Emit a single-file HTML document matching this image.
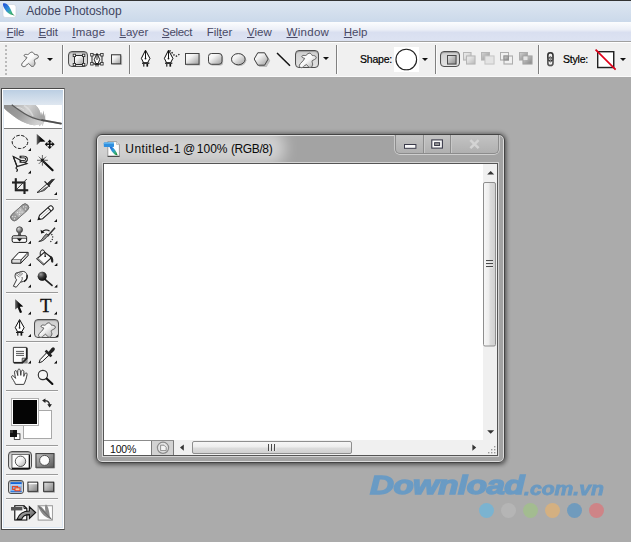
<!DOCTYPE html>
<html><head><meta charset="utf-8">
<style>
html,body{margin:0;padding:0;}
body{width:631px;height:542px;overflow:hidden;background:#ababab;position:relative;font-family:"Liberation Sans",sans-serif;}
.abs,.mi,.sep,.tsep,svg{position:absolute;}
svg{overflow:visible;}
#titlebar{left:0;top:0;width:631px;height:22px;background:linear-gradient(#dde6f1,#cbd9ea);border-top:1px solid #333;box-sizing:border-box;}
#title{left:26.2px;top:4.2px;font-size:12px;color:#41455f;white-space:nowrap;}
#menubar{left:0;top:22px;width:631px;height:19px;background:linear-gradient(#fcfdfe 0%,#eceff7 40%,#d9dff0 55%,#dde3f2 100%);}
.mi{top:25.5px;font-size:11.5px;color:#4a4a66;white-space:nowrap;}
#optbar{left:0;top:41px;width:631px;height:36px;background:#f0f0f0;border-top:1px solid #a0a0a0;border-bottom:1px solid #fafafa;box-sizing:border-box;box-shadow:inset 0 1px 0 #fff;}
.sep{top:45px;width:1px;height:29px;background:#808080;box-shadow:1px 0 0 #fbfbfb;}
.lbl{font-size:10.5px;letter-spacing:-.2px;color:#000;-webkit-text-stroke:.2px #000;top:53px;white-space:nowrap;}
.selbtn{box-sizing:border-box;border:1px solid #4e4e4e;border-radius:4px;background:linear-gradient(#cfcfcf,#e2e2e2);box-shadow:inset 0 1px 1px rgba(0,0,0,.25);}
.dd{width:0;height:0;border-left:3px solid transparent;border-right:3px solid transparent;border-top:3px solid #111;}
#toolbox{left:1px;top:88px;width:64px;height:442px;background:#f0f0f0;border:1px solid #484848;border-right-color:#808080;box-sizing:border-box;box-shadow:inset 0 0 0 1px #fff,inset 0 0 0 2px #dbe6f2;}
#tbhead{left:3px;top:90px;width:60px;height:15px;background:linear-gradient(#bccfe3,#dfe7f0);}
#tbfeather{left:4px;top:105px;width:58px;height:23px;background:#fff;border-bottom:1px solid #808080;}
.tsep{left:6px;width:52px;height:1px;background:#9a9a9a;box-shadow:0 1px 0 #fbfbfb;}
#docshadow{left:96px;top:134px;width:409px;height:329px;border-radius:6px;box-shadow:0 0 4px 1px rgba(0,0,0,.38),1px 2px 4px rgba(0,0,0,.25);}
#docwin{left:96px;top:134px;width:409px;height:329px;background:#a3a3a3;border:1px solid #444;border-radius:6px;box-sizing:border-box;box-shadow:inset 0 0 0 1px #dcdcdc;overflow:hidden;}
#docinner{left:103px;top:163px;width:395px;height:293px;background:#f0f0f0;border:1px solid #555;box-sizing:border-box;box-shadow:0 0 0 1px #d4d4d4;}
#canvas{left:104px;top:164px;width:379px;height:276px;background:#fff;}
#doctitle,.dt{top:142px;font-size:12px;color:#0a0a0a;white-space:nowrap;}
#wbtns{left:395px;top:135px;width:104px;height:19px;border:1px solid #8c8c8c;border-top:none;border-radius:0 0 5px 5px;box-sizing:border-box;background:linear-gradient(#c3c3c3,#b0b0b0);box-shadow:0 1px 0 #cfcfcf,1px 0 0 #c8c8c8,-1px 0 0 #c8c8c8;}
.wdiv{top:135px;width:1px;height:18px;background:#8c8c8c;box-shadow:1px 0 0 #c8c8c8;}
#wm1{left:369.5px;top:470.5px;font:italic bold 25px "Liberation Sans",sans-serif;color:#6a9bc4;transform-origin:0 0;transform:scaleX(1.325);-webkit-text-stroke:1.4px #6a9bc4;white-space:nowrap;letter-spacing:-.4px;}
#wm2{left:524px;top:478.5px;font:italic bold 18px "Liberation Sans",sans-serif;color:#6a99c1;transform-origin:0 0;transform:scaleX(1.175);-webkit-text-stroke:.8px #6a99c1;white-space:nowrap;}
.dot{width:15px;height:15px;border-radius:50%;top:503px;filter:blur(.5px);}
</style></head><body>
<!-- app title bar -->
<div id="titlebar" class="abs"></div>
<svg style="left:2px;top:3px" width="15" height="15" viewBox="0 0 15 15">
<defs><linearGradient id="fg" x1="0" y1="0" x2="1" y2="1"><stop offset="0" stop-color="#1f49d8"/><stop offset=".45" stop-color="#2f8fd8"/><stop offset=".7" stop-color="#3fb88a"/><stop offset="1" stop-color="#0b6a1c"/></linearGradient></defs>
<rect x="1" y="1.5" width="13" height="13" rx="2.5" fill="#fff" stroke="#c9d0da" stroke-width=".6"/>
<path d="M1 .6 C3 -.6 5.2 .6 6.8 3 C8.4 5.5 9.8 8.4 10.6 10.8 L12.8 12.8 L10 11.8 C7.4 11.6 4.6 9.4 3 6.6 C1.8 4.6 .6 2.4 1 .6Z" fill="url(#fg)"/>
</svg>
<div id="title" class="abs">Adobe Photoshop</div>
<!-- menu bar -->
<div id="menubar" class="abs"></div>
<div class="mi" style="left:6.6px;letter-spacing:-.25px"><u>F</u>ile</div>
<div class="mi" style="left:38.4px;letter-spacing:-.1px"><u>E</u>dit</div>
<div class="mi" style="left:72.3px;letter-spacing:.2px"><u>I</u>mage</div>
<div class="mi" style="left:119.5px"><u>L</u>ayer</div>
<div class="mi" style="left:162px;letter-spacing:-.3px"><u>S</u>elect</div>
<div class="mi" style="left:206.7px">Fil<u>t</u>er</div>
<div class="mi" style="left:247px"><u>V</u>iew</div>
<div class="mi" style="left:286.5px;letter-spacing:.3px"><u>W</u>indow</div>
<div class="mi" style="left:343.8px"><u>H</u>elp</div>
<!-- options bar -->
<div id="optbar" class="abs"></div>
<!--OPT-START-->
<div class="abs" style="left:5px;top:44px;width:2px;height:31px;background:repeating-linear-gradient(#f0f0f0 0,#f0f0f0 1px,#b4b4b4 1px,#b4b4b4 3px,#f0f0f0 3px,#f0f0f0 4px);opacity:.9"></div>
<div class="sep" style="left:62px"></div>
<div class="sep" style="left:129px"></div>
<div class="sep" style="left:336px"></div>
<div class="sep" style="left:435px"></div>
<div class="sep" style="left:538px"></div>
<div class="abs selbtn" style="left:68px;top:50.5px;width:20px;height:16.5px"></div>
<div class="abs selbtn" style="left:295px;top:50px;width:24px;height:18px"></div>
<div class="abs selbtn" style="left:440px;top:50.5px;width:20px;height:16.5px"></div>
<div class="abs dd" style="left:47px;top:58px"></div>
<div class="abs dd" style="left:323px;top:57px"></div>
<div class="abs dd" style="left:422px;top:58px"></div>
<div class="abs dd" style="left:620px;top:58px"></div>
<div class="abs lbl" style="left:360px">Shape:</div>
<div class="abs lbl" style="left:563px">Style:</div>
<div class="abs" style="left:394px;top:47px;width:25px;height:25px;background:#fff"></div>
<svg style="left:0;top:0;filter:drop-shadow(.8px .8px .5px rgba(0,0,0,.25))" width="631" height="80" viewBox="0 0 631 80">
<defs>
<linearGradient id="bl" x1="0" y1="0" x2="1" y2="1"><stop offset="0" stop-color="#fff"/><stop offset=".5" stop-color="#f8f8f8"/><stop offset="1" stop-color="#a2a2a2"/></linearGradient>
<linearGradient id="sq" x1="0" y1="0" x2="1" y2="1"><stop offset="0" stop-color="#fff"/><stop offset=".35" stop-color="#f2f2f2"/><stop offset="1" stop-color="#9c9c9c"/></linearGradient><linearGradient id="sq2" x1="0" y1="0" x2="1" y2="1"><stop offset="0" stop-color="#e8e8e8"/><stop offset="1" stop-color="#8a8a8a"/></linearGradient>
<linearGradient id="dk" x1="0" y1="0" x2="1" y2="1"><stop offset="0" stop-color="#d8d8d8"/><stop offset="1" stop-color="#555"/></linearGradient>
</defs>
<!-- custom shape blob (tool preset) -->
<path id="blob1" d="M31.5,52.2C33,52 34,53.5 34.6,54.6C36,54.4 38.3,54.8 38.5,56.5C38.6,58.3 35.5,58.8 34.4,59.8C33.8,61 35.5,62.5 34.8,64.2C34.2,66 32.8,66.8 31.8,66.4C30.2,65.8 29.8,64 28.7,63.5C27.3,63.6 26,66.5 24.2,66.7C22.6,66.8 21.3,65.6 21.7,64.2C22.3,62.2 26,60 27,57.3C26,57 24.3,56.8 24.2,55.6C24.2,54.3 26,54.2 27.5,54.6C29,54.6 29.5,52.4 31.5,52.2Z" fill="url(#bl)" stroke="#6a6a6a" stroke-width="1"/>
<path transform="translate(277.7,1)" d="M31.5,52.2C33,52 34,53.5 34.6,54.6C36,54.4 38.3,54.8 38.5,56.5C38.6,58.3 35.5,58.8 34.4,59.8C33.8,61 35.5,62.5 34.8,64.2C34.2,66 32.8,66.8 31.8,66.4C30.2,65.8 29.8,64 28.7,63.5C27.3,63.6 26,66.5 24.2,66.7C22.6,66.8 21.3,65.6 21.7,64.2C22.3,62.2 26,60 27,57.3C26,57 24.3,56.8 24.2,55.6C24.2,54.3 26,54.2 27.5,54.6C29,54.6 29.5,52.4 31.5,52.2Z" fill="url(#bl)" stroke="#6a6a6a" stroke-width="1"/>
<!-- shape layers -->
<rect x="74.5" y="55.5" width="9" height="9" fill="url(#sq)" stroke="#2a2a2a"/>
<g fill="#fff" stroke="#2a2a2a" stroke-width=".8"><rect x="73.2" y="54.2" width="2.4" height="2.4"/><rect x="82.4" y="54.2" width="2.4" height="2.4"/><rect x="73.2" y="63.4" width="2.4" height="2.4"/><rect x="82.4" y="63.4" width="2.4" height="2.4"/></g>
<!-- paths -->
<rect x="92" y="54.8" width="10" height="9" fill="none" stroke="#2a2a2a" stroke-width=".9"/>
<g fill="#fff" stroke="#2a2a2a" stroke-width=".8"><rect x="90.7" y="53.6" width="2.4" height="2.4"/><rect x="100.7" y="53.6" width="2.4" height="2.4"/><rect x="90.7" y="62.6" width="2.4" height="2.4"/><rect x="100.7" y="62.6" width="2.4" height="2.4"/></g>
<path d="M97,53.5L94.3,59.5L95.8,63.5L98.2,63.5L99.7,59.5Z M97,54V60 M94.5,64.4H99.5 M96,64.5V66.5M98,64.5V66.5" fill="#fff" stroke="#111" stroke-width=".9"/>
<!-- fill pixels -->
<rect x="112.6" y="55.8" width="9.5" height="9.2" fill="#bdbdbd" opacity=".7"/>
<rect x="111.5" y="54.8" width="9.2" height="9" fill="url(#sq)" stroke="#3a3a3a"/>
<!-- pen -->
<path d="M145.5,50.2L141.4,58.4L143.6,62.8H147.6L149.9,58.4Z" fill="#fff" stroke="#111" stroke-width="1"/>
<path d="M145.5,51V58" stroke="#111" stroke-width="1"/><circle cx="145.5" cy="58.6" r=".9" fill="#111"/>
<path d="M142,63.2H149.3" stroke="#111" stroke-width="1.1"/><path d="M143.8,64V66.6" stroke="#111" stroke-width="1"/><path d="M147.3,64V66.6" stroke="#111" stroke-width="1.6"/>
<!-- freeform pen -->
<path d="M168.5,50.2L164.4,58.4L166.6,62.8H170.6L172.9,58.4Z" fill="#fff" stroke="#111" stroke-width="1"/>
<path d="M168.5,51V58" stroke="#111" stroke-width="1"/><circle cx="168.5" cy="58.6" r=".9" fill="#111"/>
<path d="M165,63.2H172.3" stroke="#111" stroke-width="1.1"/><path d="M166.8,64V66.6" stroke="#111" stroke-width="1"/><path d="M170.3,64V66.6" stroke="#111" stroke-width="1.6"/>
<path d="M169.5,50.5C172,51.5 173,55 175.5,56C177.5,56.5 179,54.5 180,53" fill="none" stroke="#222" stroke-width="1.3" stroke-dasharray="1.3 1.5"/>
<!-- rectangle / rrect / ellipse / polygon / line -->
<rect x="186.6" y="54.8" width="13.5" height="10.6" fill="#b8b8b8" opacity=".7"/>
<rect x="185.5" y="53.5" width="13.5" height="10.8" fill="url(#sq)" stroke="#444"/>
<rect x="209.6" y="54.8" width="13.5" height="10.6" rx="3" fill="#b8b8b8" opacity=".7"/>
<rect x="208.5" y="53.5" width="13.5" height="10.8" rx="3" fill="url(#sq)" stroke="#444"/>
<ellipse cx="239.3" cy="60.3" rx="7" ry="5.6" fill="#b8b8b8" opacity=".7"/>
<ellipse cx="238.3" cy="59.2" rx="6.8" ry="5.6" fill="url(#sq)" stroke="#444"/>
<path d="M258.5,53.8H265.5L269.2,60L265.5,66.2H258.5L254.8,60Z" transform="translate(1,.8)" fill="#b8b8b8" opacity=".7"/>
<path d="M257.8,52.8H264.6L268.2,59L264.6,65.2H257.8L254.2,59Z" fill="url(#sq)" stroke="#444"/>
<path d="M277,53L290,65.8" stroke="#111" stroke-width="1.3"/>
<!-- shape picker circle -->
<circle cx="406.3" cy="59.5" r="10.3" fill="#fff" stroke="#222" stroke-width="1.1"/>
<!-- combine modes -->
<rect x="447.5" y="55.5" width="8.5" height="8.5" fill="url(#sq2)" stroke="#4a4a4a"/>
<g opacity=".5">
<rect x="463.5" y="52.5" width="7.5" height="7.5" fill="url(#sq)" stroke="#999"/><rect x="466.5" y="56" width="8.5" height="8" fill="url(#sq)" stroke="#999"/>
</g>
<g opacity=".5">
<rect x="481.5" y="52.5" width="8" height="7.5" fill="url(#dk)" stroke="#999"/><rect x="485" y="56" width="9" height="8" fill="#f6f6f6" stroke="#bbb"/>
</g>
<g opacity=".6">
<rect x="500.5" y="52.5" width="8" height="7.5" fill="none" stroke="#999"/><rect x="504" y="56" width="8.5" height="8" fill="none" stroke="#999"/><rect x="504" y="56" width="4.5" height="4" fill="url(#dk)" stroke="#666"/>
</g>
<g opacity=".6">
<rect x="519.5" y="52.5" width="8" height="7.5" fill="url(#dk)" stroke="#999"/><rect x="523" y="56" width="9" height="8" fill="url(#dk)" stroke="#888"/><rect x="523.5" y="56.5" width="4" height="3.5" fill="#f4f4f4"/>
</g>
<!-- chain -->
<rect x="547.8" y="52.8" width="5.2" height="8" rx="2.6" fill="none" stroke="#333" stroke-width="1.5"/>
<rect x="547.8" y="57.6" width="5.2" height="8" rx="2.6" fill="none" stroke="#555" stroke-width="1.5"/>
<path d="M550.4,56V62.5" stroke="#888" stroke-width="1"/>
<!-- style box -->
<rect x="597.7" y="51.7" width="16" height="15.8" fill="#fff" stroke="#222" stroke-width="1.4"/>
<path d="M595.6,49.6L615.6,69.6" stroke="#e2001a" stroke-width="1.7"/>
</svg>
<!--OPT-END-->
<!-- toolbox -->
<div id="toolbox" class="abs"></div>
<div id="tbhead" class="abs"></div>
<div id="tbfeather" class="abs"></div>
<!--TOOL-START-->
<div class="tsep" style="top:199px"></div>
<div class="tsep" style="top:292px"></div>
<div class="tsep" style="top:341px"></div>
<div class="tsep" style="top:390px"></div>
<div class="tsep" style="top:445px"></div>
<div class="tsep" style="top:474px"></div>
<div class="tsep" style="top:498px"></div>
<div class="abs selbtn" style="left:34px;top:319px;width:25px;height:19px"></div>
<div class="abs selbtn" style="left:8px;top:451px;width:24px;height:19px"></div>
<div class="abs selbtn" style="left:8px;top:480px;width:16px;height:14px;border-radius:3px"></div>
<div class="abs" style="left:23px;top:410px;width:29px;height:29px;box-sizing:border-box;border:1px solid #a8a8a8;background:#fff"></div>
<div class="abs" style="left:11px;top:398px;width:28px;height:28px;box-sizing:border-box;border:1px solid #b0b0b0;background:#050505;box-shadow:inset 0 0 0 1px #fff"></div>
<div class="abs" style="left:40px;top:295.5px;font:19px 'Liberation Serif',serif;color:#111;-webkit-text-stroke:.3px #111;line-height:19px">T</div>
<svg style="left:0;top:0;filter:drop-shadow(.8px .8px .5px rgba(0,0,0,.28))" width="70" height="542" viewBox="0 0 70 542">
<defs>
<linearGradient id="tb1" x1="0" y1="0" x2="1" y2="1"><stop offset="0" stop-color="#fff"/><stop offset=".45" stop-color="#f4f4f4"/><stop offset="1" stop-color="#a8a8a8"/></linearGradient>
<linearGradient id="tsq" x1="0" y1="0" x2="1" y2="1"><stop offset="0" stop-color="#e8e8e8"/><stop offset="1" stop-color="#777"/></linearGradient>
<linearGradient id="arr" x1="0" y1="0" x2="1" y2="0"><stop offset="0" stop-color="#6a6a6a"/><stop offset=".45" stop-color="#111"/><stop offset="1" stop-color="#000"/></linearGradient>
<radialGradient id="ball" cx=".35" cy=".3" r=".8"><stop offset="0" stop-color="#999"/><stop offset=".5" stop-color="#333"/><stop offset="1" stop-color="#000"/></radialGradient>
<radialGradient id="knob" cx=".35" cy=".3" r=".8"><stop offset="0" stop-color="#ddd"/><stop offset=".6" stop-color="#777"/><stop offset="1" stop-color="#333"/></radialGradient>
<linearGradient id="fe1" x1="0" y1="0" x2="1" y2=".45"><stop offset="0" stop-color="#8c8c8c"/><stop offset=".5" stop-color="#9c9c9c"/><stop offset="1" stop-color="#d0d0d0"/></linearGradient>
<linearGradient id="fe2" x1="0" y1="0" x2="1" y2=".3"><stop offset="0" stop-color="#b4b4b4"/><stop offset=".5" stop-color="#cfcfcf"/><stop offset="1" stop-color="#a4a4a4"/></linearGradient>
<linearGradient id="qm" x1="0" y1="0" x2="1" y2="1"><stop offset="0" stop-color="#c4c4c4"/><stop offset="1" stop-color="#5a5a5a"/></linearGradient>
<linearGradient id="scr" x1="0" y1="0" x2="1" y2="1"><stop offset="0" stop-color="#e4e4e4"/><stop offset="1" stop-color="#808080"/></linearGradient>
</defs>
<!-- header feather -->
<path d="M4,105H12.6C18,109 25,114.5 32.4,117.2C36,118.6 40,119.6 44.4,120.5L43.6,122.4L42.7,126L41.2,123.6L39.8,126.2L38.4,124.2C36,125.5 33,125.3 30,124.5C25,123.2 19,120.6 14,116.6C9.5,113 5.5,110 4,108Z" fill="url(#fe1)"/>
<path d="M12.6,105H35.5C38.5,107.5 40.6,111.5 41,116L41.9,112L42.6,116L43.5,110.6L44.2,117L45.1,113.4L45.2,120.6C40,119.6 36,118.6 32.4,117.2C25,114.5 18,109 12.6,105Z" fill="url(#fe2)"/>
<path d="M16,107.6C19,107.2 22,108.4 24,110.2" fill="none" stroke="#e4e4e4" stroke-width="1" opacity=".8"/>
<path d="M24,105.5C28,108 31,111.5 33,116" fill="none" stroke="#e6e6e6" stroke-width="1.6" opacity=".6"/>
<path d="M11.8,104.8C18,109.4 25,114.8 32.4,117.6C36,119 40,120 44.4,120.8" fill="none" stroke="#5a5a5a" stroke-width="1.2"/>
<path d="M42,120.2C48,121.4 54,122.4 61,123.6" fill="none" stroke="#4e4e4e" stroke-width="1.7" stroke-linecap="round"/>
<!-- corner triangles -->
<path d="M31,151h-3l3,-3zM31,173.5h-3l3,-3zM57,195h-3l3,-3zM31,222h-3l3,-3zM57,222h-3l3,-3zM31,243.7h-3l3,-3zM57.3,243.7h-3l3,-3zM31,266h-3l3,-3zM57.3,266h-3l3,-3zM31,287.5h-3l3,-3zM57.3,287.5h-3l3,-3zM31,314.5h-3l3,-3zM57,314.5h-3l3,-3zM31,337h-3l3,-3zM58.3,337.3h-3l3,-3zM31,363.5h-3l3,-3zM57,363.5h-3l3,-3z" fill="#111"/>
<!-- elliptical marquee -->
<ellipse cx="20" cy="141.9" rx="7.8" ry="6.6" fill="none" stroke="#2a2a2a" stroke-width="1" stroke-dasharray="3.4 1.6"/>
<!-- move -->
<path d="M36.8,134V145L40.2,141.8L45.4,141.4Z" fill="url(#arr)"/>
<path d="M49.7,139.6L52,142.2H50.4V143.5H52.2V142L54.6,144.3L52.2,146.6V145.1H50.4V146.6H52L49.7,149.1L47.4,146.6H49V145.1H47.2V146.6L44.8,144.3L47.2,142V143.5H49V142.2H47.4Z" fill="#111"/>
<!-- magnetic lasso -->
<path d="M13.3,156.6L27,163.6L17,166.6Z" fill="none" stroke="#222" stroke-width="1.1"/>
<path d="M13.3,156.6L17.2,166.6C16,167.5 15.5,168.5 16.8,169C18,169.4 17.6,170.5 16.4,171.6" fill="none" stroke="#222" stroke-width="1.1"/>
<path d="M19.6,157H23.6C25.8,157 26.6,158 26.6,159.2C26.6,160.4 25.8,161.4 23.6,161.4H19.6" fill="none" stroke="#222" stroke-width="2.6"/><path d="M21.4,157H23.6C25.6,157 26.6,158 26.6,159.2C26.6,160.4 25.6,161.4 23.6,161.4H21.4" fill="none" stroke="#e8e8e8" stroke-width=".9"/>
<!-- magic wand -->
<path d="M44,162L52.6,170.2" stroke="#111" stroke-width="2" stroke-linecap="round"/>
<path d="M42.4,155V165.6M37,160.3H47.8M38.8,156.7L46,163.9M46,156.7L38.8,163.9" stroke="#444" stroke-width=".7"/>
<path d="M41,158.9L43.8,161.7M43.8,158.9L41,161.7" stroke="#111" stroke-width="1.1"/>
<!-- crop -->
<path d="M15.8,178.2V190.3H28.2M12,182.4H24.5V194" fill="none" stroke="#222" stroke-width="2"/>
<path d="M26.8,179L17,189" stroke="#333" stroke-width=".9"/>
<!-- slice -->
<path d="M53.6,179.4L46.4,184.4L37,192.6L44.4,190.4L48.6,186.2Z" fill="#f4f4f4" stroke="#222" stroke-width=".9"/>
<path d="M55.2,178.8L51.6,179.2L46.6,184L48.6,186Z" fill="#333"/>
<path d="M44.6,181.4L49.8,186.6" stroke="#222" stroke-width="1.1"/>
<path d="M37,192.6L44.4,190.4L48.4,186.2L46,187L42,190Z" fill="#666"/>
<!-- healing brush (bandaid) -->
<g transform="rotate(-42 19.8 212.2)"><rect x="8.8" y="208.6" width="21.6" height="7.2" rx="3.6" fill="#9b9b9b" stroke="#6a6a6a" stroke-width=".9"/><rect x="15.8" y="208.9" width="8" height="6.6" fill="#b8b8b8"/>
<g fill="#eee"><circle cx="11.5" cy="210.8" r=".6"/><circle cx="13.5" cy="212.2" r=".6"/><circle cx="11.5" cy="213.6" r=".6"/><circle cx="18" cy="210.8" r=".6"/><circle cx="19.8" cy="212.2" r=".6"/><circle cx="21.6" cy="210.8" r=".6"/><circle cx="18" cy="213.6" r=".6"/><circle cx="21.6" cy="213.6" r=".6"/><circle cx="26.1" cy="210.8" r=".6"/><circle cx="28.1" cy="212.2" r=".6"/><circle cx="26.1" cy="213.6" r=".6"/></g></g>
<!-- pencil -->
<g transform="rotate(-42 45.5 213)"><path d="M35.6,213L39.5,210.7H52.8C54.3,210.7 54.9,211.6 54.9,213C54.9,214.4 54.3,215.3 52.8,215.3H39.5Z" fill="#fff" stroke="#222" stroke-width="1"/><path d="M35.3,213L38,211.5V214.5Z" fill="#111"/><path d="M39.5,213H50.5" stroke="#999" stroke-width=".6"/><path d="M51,210.7V215.3" stroke="#222" stroke-width="1.1"/></g>
<!-- clone stamp -->
<circle cx="19.5" cy="229.8" r="3" fill="url(#knob)" stroke="#333" stroke-width=".6"/>
<path d="M18.3,232.5H20.7L21.3,236H17.7Z" fill="#555"/>
<rect x="12.2" y="235.8" width="14.4" height="6.6" rx="1.6" fill="#fafafa" stroke="#222" stroke-width="1"/>
<path d="M12.5,238.2H26.3" stroke="#222" stroke-width=".9"/>
<path d="M16.8,238.4H22.2L19.5,241.4Z" fill="#111"/>
<!-- history brush -->
<path d="M55,227.8L47.5,236.2" stroke="#333" stroke-width="1.4"/>
<path d="M48.4,235.2L46.2,237.6C44.5,239.8 41.5,241.5 38.8,241.5C41.5,240.4 42.5,238.5 44,236.4L46.4,233.8Z" fill="#999" stroke="#222" stroke-width=".8"/>
<path d="M41.8,232.4C43.5,229.6 47.5,229.2 49.5,231.2" fill="none" stroke="#222" stroke-width="1.1"/>
<path d="M40.6,229.8L41.2,233.6L44.6,232.4Z" fill="#111"/>
<path d="M51.5,234.2C53.6,236.6 53,240.4 49.4,242.4" fill="none" stroke="#222" stroke-width="1.1" stroke-dasharray="1.1 1.4"/>
<!-- eraser -->
<path d="M18.9,252.4H28L20.9,260H11.8Z" fill="#fdfdfd" stroke="#222" stroke-width="1"/>
<path d="M11.8,260V263.2H20.9V260M20.9,263.2L28,255.6V252.4" fill="#ddd" stroke="#222" stroke-width="1"/>
<!-- paint bucket -->
<path d="M44.6,252.2L51.4,257.6L43.6,264.8L36.9,258.8Z" fill="#fbfbfb" stroke="#222" stroke-width="1.1"/>
<path d="M36.9,258.8L43.6,264.8L44.3,263.4L38,257.8Z" fill="#888"/>
<path d="M40.6,256.2C39.6,252.6 40.8,249.8 42.6,249.9C44.2,250 45,252 45.2,255.6" fill="none" stroke="#222" stroke-width="1"/>
<circle cx="45.2" cy="256.2" r=".9" fill="#222"/>
<path d="M49.4,255.4C51.4,255.6 53,257.2 53.2,259.4V262.2C52.4,262.8 51.4,262.4 51.2,261.4C51,259.8 50.8,258.8 50.2,258.4Z" fill="#222"/>
<!-- smudge -->
<path d="M15.6,273.4L21.8,271.4C24.6,271 26.8,272.8 27,275.4C27.2,278.2 26,280.6 23.4,281.4L20.4,282.2L16.2,287.2L13.4,286.2L16.6,279.8C15.2,278.4 14.6,276 15.6,273.4Z" fill="#f8f8f8" stroke="#333" stroke-width=".9"/>
<path d="M15.4,274.2L19.6,277.2M16.4,272.8L20.8,276M18.2,272.2L22,275.2M20.2,271.8L23,274.2" stroke="#555" stroke-width=".7"/>
<path d="M20.4,282.2C22.2,280.4 22.6,278.6 22,277" fill="none" stroke="#333" stroke-width=".8"/>
<path d="M24,281.6C26.4,280.4 27.6,278 27,275" fill="none" stroke="#111" stroke-width="1.3"/>
<!-- dodge -->
<path d="M45,279.4L52,285.4" stroke="#222" stroke-width="1.5" stroke-linecap="round"/>
<circle cx="42.2" cy="276.2" r="4.5" fill="url(#ball)"/>
<!-- path selection arrow -->
<path d="M15.2,299.2V309.6L17.6,307.4L20,313L22,312.2L19.7,306.7L23.2,306.6Z" fill="url(#arr)"/>
<!-- pen tool -->
<path d="M19.6,319.6L15.3,327.6L17.6,331.8H21.8L24.1,327.6Z" fill="#fff" stroke="#111" stroke-width="1"/>
<path d="M19.6,320.4V327" stroke="#111" stroke-width="1"/><circle cx="19.6" cy="327.8" r=".9" fill="#111"/>
<path d="M16,332.4H23.4" stroke="#111" stroke-width="1.1"/><path d="M17.8,333V335.6" stroke="#111" stroke-width="1"/><path d="M21.4,333V335.6" stroke="#111" stroke-width="1.6"/>
<!-- custom shape (selected) -->
<path transform="translate(16.9,270.7)" d="M31.5,52.2C33,52 34,53.5 34.6,54.6C36,54.4 38.3,54.8 38.5,56.5C38.6,58.3 35.5,58.8 34.4,59.8C33.8,61 35.5,62.5 34.8,64.2C34.2,66 32.8,66.8 31.8,66.4C30.2,65.8 29.8,64 28.7,63.5C27.3,63.6 26,66.5 24.2,66.7C22.6,66.8 21.3,65.6 21.7,64.2C22.3,62.2 26,60 27,57.3C26,57 24.3,56.8 24.2,55.6C24.2,54.3 26,54.2 27.5,54.6C29,54.6 29.5,52.4 31.5,52.2Z" fill="url(#tb1)" stroke="#6a6a6a" stroke-width="1"/>
<!-- notes -->
<path d="M14.6,348.6H27.6V363.4H14.6Z" fill="#555" opacity=".55"/>
<path d="M13.4,347.4H26.4V358.2L22.2,362.4H13.4Z" fill="#fcfcfc" stroke="#333" stroke-width=".9"/>
<path d="M26.4,358.2H22.2V362.4Z" fill="#bbb" stroke="#333" stroke-width=".8"/><path d="M26.8,347.8V358.4L22.4,362.8H13.8" fill="none" stroke="#222" stroke-width="1.5"/>
<path d="M16,351.4H24M16,353.4H24M16,355.4H24" stroke="#444" stroke-width=".9"/>
<!-- eyedropper -->
<path d="M47,352.4L40.2,359.6L39,362.8L42.2,361.6L49.4,354.8Z" fill="#fafafa" stroke="#222" stroke-width="1"/>
<path d="M45.6,350.6L51.4,356.4" stroke="#222" stroke-width="2.6"/>
<path d="M48,352.4L51,349C52,347.6 53.6,347.2 54.4,348C55.2,348.8 54.8,350.4 53.4,351.4L50,354.4Z" fill="#222"/>
<!-- hand -->
<path d="M15.6,384.4C14.6,381.6 12.4,379 11.6,377.2C11.2,375.8 12.6,375.2 13.6,376.2L15.6,378.4C15.2,376 14.4,373 14.6,371.6C14.8,370.4 16.4,370.4 16.8,371.6L17.8,375.6C17.8,373.6 17.6,370.8 18,369.8C18.6,368.8 20,369 20.2,370.2L20.8,375.4C21,373.6 21.2,371.4 21.8,370.6C22.4,369.8 23.6,370.2 23.8,371.4L23.8,376.4C24.4,375 25,373.4 25.6,373C26.4,372.6 27.2,373.4 27,374.6C26.6,377.4 25.4,381.6 23.8,384.4Z" fill="#fdfdfd" stroke="#333" stroke-width=".9"/>
<!-- zoom -->
<circle cx="42.9" cy="375" r="4.6" fill="#f6f6f6" stroke="#333" stroke-width="1.1"/>
<path d="M46.6,378.6L52.4,384" stroke="#111" stroke-width="2" stroke-linecap="round"/>
<!-- swap arrows -->
<path d="M44,400.6C47.4,400.4 49.4,402.4 49.6,405.4" fill="none" stroke="#333" stroke-width="1.3"/>
<path d="M42.2,400.6L45.4,398.4V403Z" fill="#222"/><path d="M49.6,407.4L47.4,404.2H51.8Z" fill="#222"/>
<!-- default colors -->
<rect x="14.3" y="433.8" width="5.6" height="5.6" fill="#fff" stroke="#333" stroke-width=".8"/>
<rect x="10" y="430" width="7" height="7" fill="#111"/><rect x="10" y="430" width="3" height="3" fill="#555" opacity=".6"/>
<!-- standard mode -->
<rect x="12" y="454.4" width="17.2" height="13.8" fill="#fcfcfc" stroke="#555" stroke-width=".8"/><path d="M12,468.4H29.4V454.8" fill="none" stroke="#111" stroke-width="1.2"/>
<circle cx="20.5" cy="461.3" r="5.2" fill="url(#tb1)" stroke="#444" stroke-width=".9"/>
<!-- quick mask -->
<rect x="36" y="453.6" width="18" height="13.8" fill="url(#qm)" stroke="#3a3a3a" stroke-width="1"/><path d="M36,468H54.6V454" fill="none" stroke="#888" stroke-width="1" opacity=".6"/>
<circle cx="44.6" cy="460.4" r="5" fill="#fbfbfb" stroke="#444" stroke-width=".9"/>
<!-- screen modes -->
<rect x="10.6" y="482.2" width="11" height="10" fill="#7fb6f2"/><rect x="10.6" y="482.2" width="11" height="2.2" fill="#1565d8"/><rect x="10.6" y="484.4" width="11" height="1" fill="#e8f2ff"/><rect x="10.6" y="491" width="11" height="1.2" fill="#2d7ae0"/>
<rect x="12.6" y="486.4" width="5" height="3" fill="none" stroke="#e8431a" stroke-width="1"/><rect x="15" y="487.8" width="5" height="3" fill="#f6c9b0" stroke="#e8431a" stroke-width="1"/>
<rect x="28" y="482.2" width="9.6" height="9.2" fill="url(#scr)" stroke="#2a2a2a" stroke-width="1"/><rect x="28.5" y="482.8" width="8.6" height="1.4" fill="#fafafa"/><path d="M28,492.2H38.4V482.6" fill="none" stroke="#999" stroke-width=".9" opacity=".7"/>
<rect x="43.7" y="482.2" width="10" height="9.2" fill="url(#scr)" stroke="#2a2a2a" stroke-width="1"/><path d="M43.7,492.2H54.5V482.6" fill="none" stroke="#999" stroke-width=".9" opacity=".7"/>
<!-- jump to imageready -->
<path d="M14.8,505.8H24L26.8,508.6V520H14.8Z" fill="#fafafa" stroke="#111" stroke-width="1.1"/>
<path d="M24,505.8V508.6H26.8" fill="none" stroke="#111" stroke-width=".9"/>
<rect x="11" y="507" width="11.4" height="3.4" fill="#555"/>
<path d="M17,519.4C19,514 23,511 29.4,511V506.8L35.6,512.6L29.4,518.4V514.6C24.6,514.6 22.6,516 21.6,519.4Z" fill="url(#qm)" stroke="#111" stroke-width="1.1"/>
<rect x="38.2" y="505.8" width="14.2" height="14.2" fill="#fdfdfd" stroke="#9a9a9a" stroke-width=".9"/>
<path d="M37.6,505.6C40,505 43,508 45.4,511.4C45,508.6 44.6,506 46,504.6C48.2,506.4 49.4,511.4 49.8,516.4L52,519.8L48.4,518.2C44.4,517 40.4,512.4 37.6,505.6Z" fill="#8a8a8a"/>
<path d="M39,506.6C43,510.4 47.6,515.4 51.6,519.4" stroke="#555" stroke-width=".8" fill="none"/>
</svg>
<!--TOOL-END-->
<!-- document window -->
<div id="docshadow" class="abs"></div>
<div id="docwin" class="abs"><div class="abs" style="left:-12px;top:-4px;width:200px;height:34px;background:rgba(255,255,255,.5);filter:blur(7px);border-radius:14px"></div></div>
<div id="docinner" class="abs"></div>
<div id="canvas" class="abs"></div>
<div class="abs" style="left:151px;top:440px;width:23px;height:15px;background:#d2d2d2;border-left:1px solid #7a7a7a;border-right:1px solid #7a7a7a;box-sizing:border-box"></div>
<div class="abs" style="left:104px;top:440px;width:47px;height:15px;background:#fff"></div>
<div class="abs" style="left:104px;top:440px;width:70px;height:1px;background:#8c8c8c"></div>
<div class="abs" style="left:110px;top:442.5px;font-size:10.5px;color:#111;letter-spacing:-.2px">100%</div>
<div id="doctitle" class="abs" style="left:125.3px;letter-spacing:.42px">Untitled-1</div><div class="abs dt" style="left:182.9px">@</div><div class="abs dt" style="left:196.8px">100%</div><div class="abs dt" style="left:230.9px;letter-spacing:-.37px">(RGB/8)</div>
<div id="wbtns" class="abs"></div>
<div class="abs wdiv" style="left:423px"></div>
<div class="abs wdiv" style="left:450px"></div>
<!--DOC-START-->
<!-- window buttons glyphs, icon, scrollbars -->
<svg style="left:0;top:0" width="631" height="542" viewBox="0 0 631 542">
<defs>
<linearGradient id="dfg" x1="0" y1="0" x2="1" y2="1"><stop offset="0" stop-color="#1b55d8"/><stop offset=".45" stop-color="#2f9ad8"/><stop offset=".75" stop-color="#35b070"/><stop offset="1" stop-color="#0b6a1c"/></linearGradient>
<linearGradient id="vth" x1="0" y1="0" x2="1" y2="0"><stop offset="0" stop-color="#f7f7f7"/><stop offset=".45" stop-color="#ededed"/><stop offset=".55" stop-color="#dcdcdc"/><stop offset="1" stop-color="#cfcfcf"/></linearGradient>
<linearGradient id="hth" x1="0" y1="0" x2="0" y2="1"><stop offset="0" stop-color="#f7f7f7"/><stop offset=".45" stop-color="#ededed"/><stop offset=".55" stop-color="#dcdcdc"/><stop offset="1" stop-color="#cfcfcf"/></linearGradient>
</defs>
<!-- doc icon -->
<path d="M107.8,141.6H116.6L119.4,144.4V156.2H107.8Z" fill="#fdfdfd" stroke="#8a8a8a" stroke-width=".8"/>
<path d="M107.6,156.4H119.6" stroke="#333" stroke-width=".9"/>
<path d="M116.6,141.6V144.4H119.4" fill="#e4e4e4" stroke="#9a9a9a" stroke-width=".6"/>
<path d="M109.4,146.4C111.6,146 114,148.4 115.4,150.6C116.4,152.2 117.2,153.6 117.6,155.2C115.8,155.4 114,154.4 112.8,152.6C111.4,150.6 110,148.4 109.4,146.4Z" fill="url(#dfg)"/>
<rect x="103.8" y="142.6" width="10.2" height="4.3" rx=".6" fill="#2f8fdf"/><rect x="103.8" y="142.6" width="10.2" height="1.4" rx=".6" fill="#58b0ee"/>
<!-- min -->
<rect x="404.5" y="144.5" width="11.4" height="3.8" fill="#fafafa" stroke="#3a3a4a" stroke-width="1"/>
<!-- max -->
<rect x="431.8" y="139.9" width="10.6" height="8.2" fill="#fafafa" stroke="#3a3a4a" stroke-width="1.1"/>
<rect x="434.6" y="142.7" width="5" height="2.8" fill="#999" stroke="#3a3a4a" stroke-width="1"/>
<!-- close -->
<path d="M470.4,140.2L478.6,148.2M478.6,140.2L470.4,148.2" stroke="#d4d4d4" stroke-width="2.5"/>
<!-- v scrollbar -->
<path d="M487.2,174.6H494.2L490.7,171Z" fill="#333"/>
<path d="M487.2,430.2H494.2L490.7,433.8Z" fill="#333"/>
<rect x="483.5" y="182.5" width="12" height="163.5" rx="1.5" fill="url(#vth)" stroke="#8e8e8e" stroke-width="1"/>
<path d="M486,260.7H493M486,263.7H493M486,266.6H493" stroke="#4a4a4a" stroke-width="1.2"/>
<path d="M486,261.8H493M486,264.8H493M486,267.7H493" stroke="#fff" stroke-width="1" opacity=".8"/>
<!-- h scrollbar -->
<path d="M183.8,444.4V450.8L180,447.6Z" fill="#333"/>
<path d="M472.4,444.4V450.8L476.2,447.6Z" fill="#333"/>
<rect x="192.5" y="441.5" width="159" height="12" rx="1.5" fill="url(#hth)" stroke="#8e8e8e" stroke-width="1"/>
<path d="M268.6,444V451M271.6,444V451M274.6,444V451" stroke="#4a4a4a" stroke-width="1.2"/>
<path d="M269.7,444V451M272.7,444V451M275.7,444V451" stroke="#fff" stroke-width="1" opacity=".8"/>
<!-- status icon -->
<circle cx="163" cy="447.8" r="5.6" fill="#e4e4e4" stroke="#8a8a8a" stroke-width="1.2"/>
<path d="M160.6,445.2H164L166.2,447.4V450.6H160.6Z" fill="#f4f4f4" stroke="#777" stroke-width=".8"/>
<!-- grip -->
<g fill="#9a9a9a"><rect x="494" y="452" width="1.4" height="1.4"/><rect x="491" y="452" width="1.4" height="1.4"/><rect x="488" y="452" width="1.4" height="1.4"/><rect x="494" y="449" width="1.4" height="1.4"/><rect x="491" y="449" width="1.4" height="1.4"/><rect x="494" y="446" width="1.4" height="1.4"/></g>
</svg>
<!--DOC-END-->
<!-- watermark -->
<div id="wm1" class="abs">Download</div>
<div id="wm2" class="abs">.com.vn</div>
<div class="abs dot" style="left:479px;background:#7bb3d0"></div>
<div class="abs dot" style="left:501px;background:#b5b5b5"></div>
<div class="abs dot" style="left:523px;background:#a3bc90"></div>
<div class="abs dot" style="left:545px;background:#d4b081"></div>
<div class="abs dot" style="left:567px;background:#709bbd"></div>
<div class="abs dot" style="left:589px;background:#ce8487"></div>
</body></html>
